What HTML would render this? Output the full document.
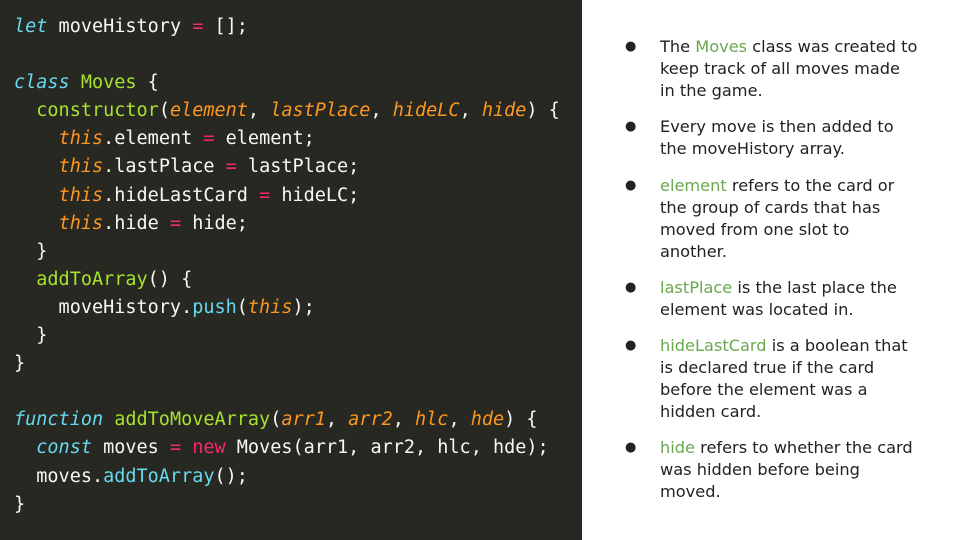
<!DOCTYPE html>
<html><head><style>
body{margin:0;width:960px;height:540px;background:#fff;position:relative;overflow:hidden}
#code{position:absolute;left:0;top:0;width:582px;height:540px;background:#272822}
pre{margin:0;position:absolute;left:14px;top:13px;font-family:"DejaVu Sans Mono","Liberation Mono",monospace;font-size:18.5px;line-height:28.1px;color:#f8f8f2}
.k{color:#66d9ef;font-style:italic}.g{color:#a6e22e}.o{color:#fd971f;font-style:italic}.p{color:#f92672}.c{color:#66d9ef}
ul{position:absolute;left:622px;top:36px;margin:0;padding:0;list-style:none;font-family:"DejaVu Sans","Liberation Sans",sans-serif;font-size:16.2px;line-height:22px;color:#222;white-space:nowrap}
li{position:relative;padding-left:38px;margin-bottom:14.3px}
li:before{content:"●";position:absolute;left:3px;font-size:13px}
.gr{color:#6aa84f}
</style></head><body>
<div id="code"><pre><span class="k">let</span> moveHistory <span class="p">=</span> [];

<span class="k">class</span> <span class="g">Moves</span> {
  <span class="g">constructor</span>(<span class="o">element</span>, <span class="o">lastPlace</span>, <span class="o">hideLC</span>, <span class="o">hide</span>) {
    <span class="o">this</span>.element <span class="p">=</span> element;
    <span class="o">this</span>.lastPlace <span class="p">=</span> lastPlace;
    <span class="o">this</span>.hideLastCard <span class="p">=</span> hideLC;
    <span class="o">this</span>.hide <span class="p">=</span> hide;
  }
  <span class="g">addToArray</span>() {
    moveHistory.<span class="c">push</span>(<span class="o">this</span>);
  }
}

<span class="k">function</span> <span class="g">addToMoveArray</span>(<span class="o">arr1</span>, <span class="o">arr2</span>, <span class="o">hlc</span>, <span class="o">hde</span>) {
  <span class="k">const</span> moves <span class="p">=</span> <span class="p">new</span> Moves(arr1, arr2, hlc, hde);
  moves.<span class="c">addToArray</span>();
}</pre></div>
<ul>
<li>The <span class="gr">Moves</span> class was created to<br>keep track of all moves made<br>in the game.</li>
<li>Every move is then added to<br>the moveHistory array.</li>
<li><span class="gr">element</span> refers to the card or<br>the group of cards that has<br>moved from one slot to<br>another.</li>
<li><span class="gr">lastPlace</span> is the last place the<br>element was located in.</li>
<li><span class="gr">hideLastCard</span> is a boolean that<br>is declared true if the card<br>before the element was a<br>hidden card.</li>
<li><span class="gr">hide</span> refers to whether the card<br>was hidden before being<br>moved.</li>
</ul>
</body></html>
